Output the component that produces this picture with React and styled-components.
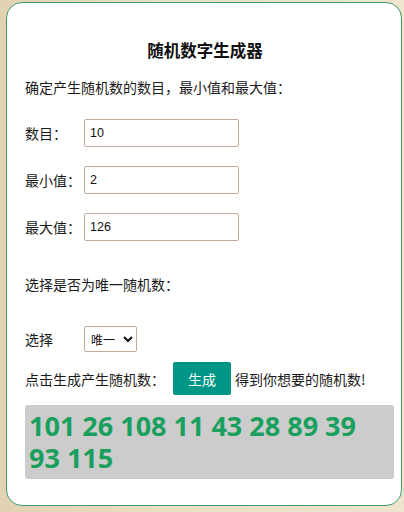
import React, { useState } from 'react';
import styled, { createGlobalStyle } from 'styled-components';

const GlobalStyle = createGlobalStyle`
    html, body {
        margin: 0;
        padding: 0;
    }
    body {
        width: 404px;
        height: 512px;
        overflow: hidden;
        background: linear-gradient(to right, #e2d2b2 0%, #ebdfc4 40%, #efe5cd 100%);
        font-family: "Noto Sans CJK SC", "Noto Sans", sans-serif;
    }
`;

const Card = styled.div`
    box-sizing: border-box;
    width: 396px;
    height: 504px;
    margin: 2px 0 0 6px;
    background: #fff;
    border: 1px solid #3d9c6d;
    border-radius: 16px;
    padding: 37px 7px 0 18px;
    display: flex;
    flex-direction: column;
`;

const Title = styled.h1`
    margin: 0;
    height: 20px;
    line-height: 20px;
    font-size: 16.5px;
    font-weight: 700;
    color: #111;
    text-align: center;
    padding-right: 9px;
`;

const Text = styled.p`
    margin: ${({ top }) => top}px 0 0;
    height: 20px;
    line-height: 20px;
    font-size: 14px;
    color: #1a1a1a;
`;

const Row = styled.div`
    display: flex;
    align-items: center;
    margin-top: ${({ top }) => top}px;
`;

const Label = styled.span`
    width: ${({ auto }) => (auto ? 'auto' : '59px')};
    flex-shrink: 0;
    font-size: 14px;
    color: #1a1a1a;
`;

const Input = styled.input`
    box-sizing: border-box;
    width: 155px;
    height: 28px;
    border: 1px solid #c4aa9c;
    border-radius: 2px;
    padding: 0 5px;
    font-family: "Liberation Sans", Arial, sans-serif;
    font-size: 12.5px;
    color: #111;
    outline: none;
`;

const Select = styled.select`
    box-sizing: border-box;
    width: 53px;
    height: 26px;
    border: 1px solid #c4aa9c;
    border-radius: 2px;
    padding: 0 0 0 2px;
    font-family: "Noto Sans CJK SC", sans-serif;
    font-size: 12px;
    color: #111;
    background: #fff;
`;

const Button = styled.button`
    box-sizing: border-box;
    width: 58px;
    height: 33px;
    margin: 0 4px 0 8px;
    border: none;
    border-radius: 2px;
    background: #009685;
    color: #fff;
    font-family: "Noto Sans CJK SC", sans-serif;
    font-size: 14px;
    cursor: pointer;
`;

const Output = styled.div`
    box-sizing: border-box;
    margin-top: 10px;
    width: 369px;
    height: 74px;
    background: #cccccc;
    border-radius: 3px;
    padding: 5px 6px 0 4px;
    font-family: "Open Sans", "Noto Sans", sans-serif;
    font-size: 27px;
    font-weight: 700;
    line-height: 32px;
    color: #19a05e;
`;

const App = () => {
    const [count, setCount] = useState('10');
    const [min, setMin] = useState('2');
    const [max, setMax] = useState('126');
    const [numbers] = useState([101, 26, 108, 11, 43, 28, 89, 39, 93, 115]);

    return (
        <>
            <GlobalStyle />
            <Card>
                <Title>随机数字生成器</Title>
                <Text top={17}>确定产生随机数的数目，最小值和最大值：</Text>
                <Row top={22}>
                    <Label>数目：</Label>
                    <Input value={count} onChange={e => setCount(e.target.value)} />
                </Row>
                <Row top={19}>
                    <Label>最小值：</Label>
                    <Input value={min} onChange={e => setMin(e.target.value)} />
                </Row>
                <Row top={19}>
                    <Label>最大值：</Label>
                    <Input value={max} onChange={e => setMax(e.target.value)} />
                </Row>
                <Text top={33}>选择是否为唯一随机数：</Text>
                <Row top={32}>
                    <Label>选择</Label>
                    <Select defaultValue="unique">
                        <option value="unique">唯一</option>
                        <option value="repeat">重复</option>
                    </Select>
                </Row>
                <Row top={10}>
                    <Label auto>点击生成产生随机数：</Label>
                    <Button>生成</Button>
                    <Label auto>得到你想要的随机数!</Label>
                </Row>
                <Output>{numbers.join(' ')}</Output>
            </Card>
        </>
    );
};

export default App;
